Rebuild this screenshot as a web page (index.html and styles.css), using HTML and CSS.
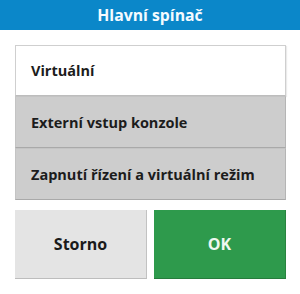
FILE: index.html
```html
<!DOCTYPE html>
<html lang="cs">
<head>
<meta charset="utf-8">
<link rel="stylesheet" href="styles.css">
</head>
<body>
<div class="dialog">
  <div class="header">Hlavní spínač</div>
  <div class="list">
    <div class="item selected">Virtuální</div>
    <div class="item">Externí vstup konzole</div>
    <div class="item">Zapnutí řízení a virtuální režim</div>
  </div>
  <div class="buttons">
    <div class="btn cancel">Storno</div>
    <div class="btn ok">OK</div>
  </div>
</div>
</body>
</html>
```
FILE: styles.css
```css
* { box-sizing: border-box; }
html, body { margin: 0; padding: 0; background: #fff; }
body { width: 300px; height: 294px; font-family: "Open Sans", "Noto Sans", sans-serif; font-weight: 700; }
.dialog { display: flex; flex-direction: column; }
.header {
  height: 30px;
  background: #0b87c9;
  color: #f4fbff;
  font-size: 15.8px;
  display: flex; align-items: center; justify-content: center;
}
.list {
  margin: 15px 14px 0 15px;
  display: flex; flex-direction: column;
}
.item {
  height: 52px;
  display: flex; align-items: center;
  padding-left: 15px;
  font-size: 14.5px;
  color: #1c1c1c;
  background: #cdcdcd;
  border: 1px solid #c4c4c4;
  border-bottom: 1px solid #a9a9a9;
  border-right: 1px solid #b5b5b5;
}
.item.selected { background: #fff; height: 51px; border: 1px solid #cfcfcf; border-bottom-color: #bdbdbd; box-shadow: 1px 1px 1px rgba(0,0,0,0.08); }
.buttons {
  margin: 10px 14px 0 15px;
  display: flex; gap: 7px;
}
.btn {
  flex: 1;
  height: 69px;
  display: flex; align-items: center; justify-content: center;
  font-size: 16px;
}
.cancel { background: #e4e4e4; color: #1a1a1a; border-right: 1px solid #c2c2c2; border-bottom: 1px solid #bdbdbd; }
.ok { background: #2e9a4c; color: #eef8f0; border-right: 1px solid #28843f; border-bottom: 1px solid #267c3c; }
```
